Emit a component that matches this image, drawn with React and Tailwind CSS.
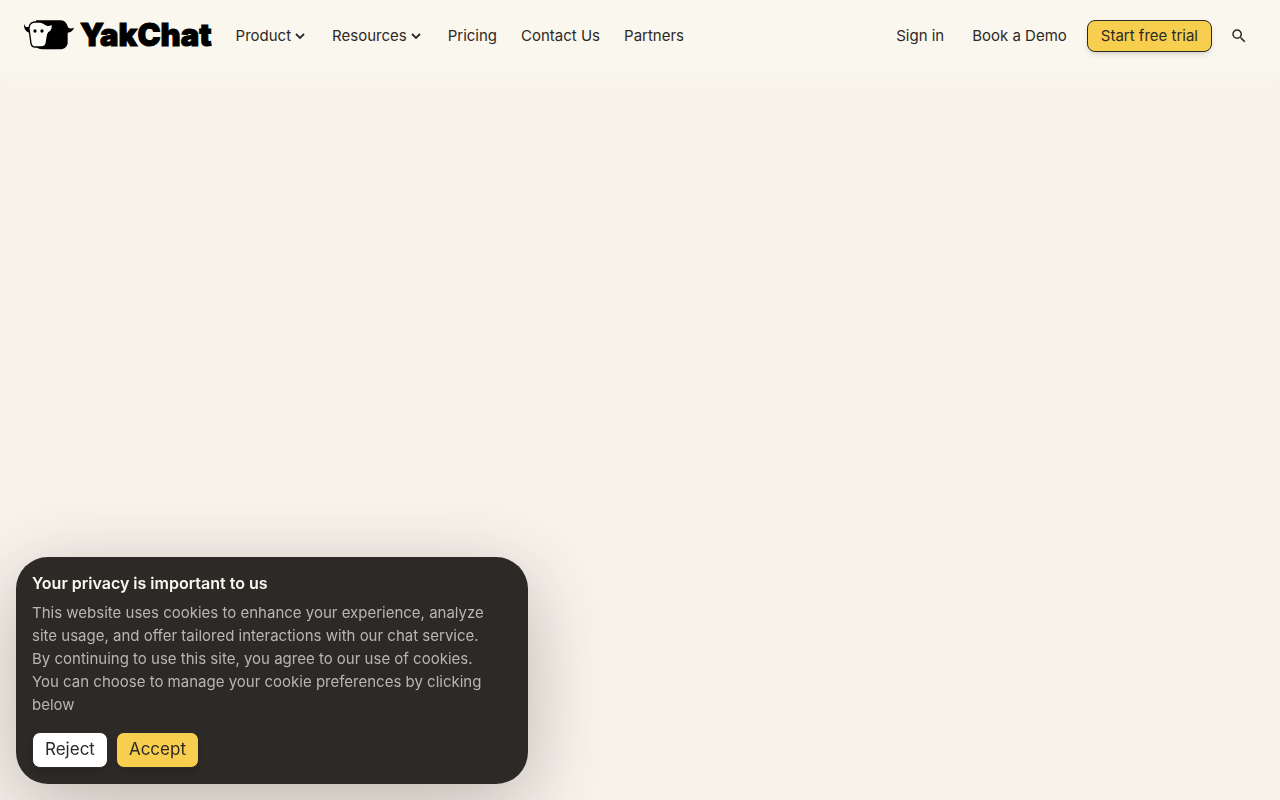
import { useState } from 'react'

const links = [
  { label: 'Pricing', href: '#pricing' },
  { label: 'Contact Us', href: '#contact' },
  { label: 'Partners', href: '#partners' },
]

function Logo() {
  return (
    <a href="#home" className="flex items-center gap-1.5 pb-0.5 text-black">
      <svg viewBox="24 21 150 96" className="h-8 w-[50px]" aria-hidden="true">
        <path
          d="M60 25H134C146 25 153 35 156 46C161 51 167 50 174 47C171 56 165 61 155 62V91C155 104 146 112 132 112H80C69 112 64 109 59 103L60 25Z"
          fill="currentColor"
        />
        <path d="M24 35C27 45 31 47 38 44L43 63C31 61 22 52 24 35Z" fill="currentColor" />
        <path
          d="M40 58C37 42 42 31 55 30H74C82 31 86 37 93 39C100 41 104 39 107 34C112 46 108 58 98 62C94 67 94 72 93 79L91 92C90 101 84 105 76 105H58C50 105 46 101 45 94L40 58Z"
          fill="#fdfcf6"
          stroke="currentColor"
          strokeWidth="4"
        />
        <circle cx="57" cy="57" r="5" fill="currentColor" />
        <circle cx="78" cy="57" r="5" fill="currentColor" />
      </svg>
      <span className="font-[Inter] text-[31px] leading-8 font-black [-webkit-text-stroke:1px_black]">YakChat</span>
    </a>
  )
}

function Chevron() {
  return (
    <svg viewBox="0 0 16 16" className="size-4" fill="none" stroke="currentColor" strokeWidth="1.8" aria-hidden="true">
      <path d="M4 6l4 4 4-4" />
    </svg>
  )
}

function NavMenu({ label }) {
  const [open, setOpen] = useState(false)
  return (
    <button type="button" aria-expanded={open} onClick={() => setOpen(!open)} className="flex items-center gap-px">
      {label}
      <Chevron />
    </button>
  )
}

function Header() {
  return (
    <header className="flex h-[72px] items-center justify-between bg-[#faf7ee] pr-[30px] pl-6 text-[15px] shadow-[0_2px_12px_#faf7ee]">
      <div className="flex items-center gap-6">
        <Logo />
        <nav className="flex items-center gap-6">
          <NavMenu label="Product" />
          <NavMenu label="Resources" />
          {links.map(l => (
            <a key={l.label} href={l.href}>{l.label}</a>
          ))}
        </nav>
      </div>
      <div className="flex items-center">
        <a href="#signin" className="mr-7">Sign in</a>
        <a href="#demo" className="mr-5">Book a Demo</a>
        <button type="button" className="h-8 rounded-lg border border-[#2d2926] bg-[#f7ce4d] px-[13px] shadow-md">
          Start free trial
        </button>
        <button type="button" aria-label="Search" className="ml-4 p-[2px]">
          <svg viewBox="0 0 24 24" className="size-[18px]" fill="currentColor" aria-hidden="true">
            <path d="M15.5 14h-.79l-.28-.27A6.471 6.471 0 0 0 16 9.5 6.5 6.5 0 1 0 9.5 16c1.61 0 3.09-.59 4.23-1.57l.27.28v.79l5 4.99L20.49 19l-4.99-5zm-6 0C7.01 14 5 11.99 5 9.5S7.01 5 9.5 5 14 7.01 14 9.5 11.99 14 9.5 14z" />
          </svg>
        </button>
      </div>
    </header>
  )
}

function CookieBanner({ onClose }) {
  return (
    <section
      aria-labelledby="cookie-title"
      className="fixed bottom-4 left-4 max-w-lg rounded-[32px] bg-[#2d2926] p-4 shadow-[0_20px_80px_rgba(45,41,38,0.3)]"
    >
      <h2 id="cookie-title" className="text-base leading-5 font-semibold text-[#faf7ee]">Your privacy is important to us</h2>
      <p className="mt-2 pr-4 text-[15px] leading-[23px] text-[#b9b6b1]">
        This website uses cookies to enhance your experience, analyze site usage, and offer tailored interactions with our chat service. By continuing to use this site, you agree to our use of cookies. You can choose to manage your cookie preferences by clicking below
      </p>
      <div className="mt-4 flex gap-2 text-[17px]">
        <button type="button" onClick={onClose} className="h-9 rounded-lg border border-[#2d2926] bg-white px-3 shadow-md">Reject</button>
        <button type="button" onClick={onClose} className="h-9 rounded-lg border border-[#2d2926] bg-[#f7ce4d] px-3 shadow-md">Accept</button>
      </div>
    </section>
  )
}

export default function App() {
  const [showCookies, setShowCookies] = useState(true)
  return (
    <div className="min-h-screen bg-[#f8f4ec] font-[Inter,sans-serif] text-[#2d2926]">
      <Header />
      <main />
      {showCookies && <CookieBanner onClose={() => setShowCookies(false)} />}
    </div>
  )
}
